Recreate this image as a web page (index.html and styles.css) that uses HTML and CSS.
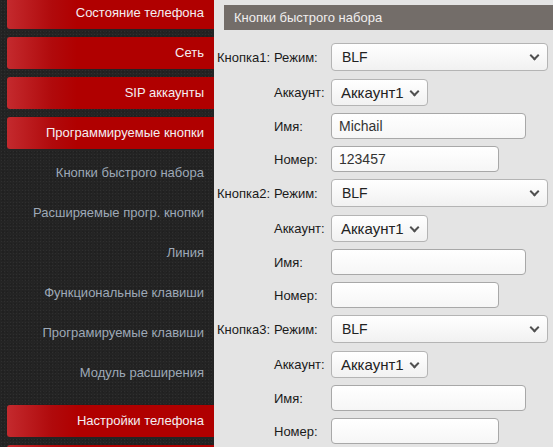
FILE: index.html
```html
<!DOCTYPE html>
<html lang="ru">
<head>
<meta charset="utf-8">
<title>Кнопки быстрого набора</title>
<link rel="stylesheet" href="styles.css">
</head>
<body>
<div class="page">
  <nav class="sidebar">
    <a class="btn first">Состояние телефона</a>
    <a class="btn">Сеть</a>
    <a class="btn">SIP аккаунты</a>
    <a class="btn">Программируемые кнопки</a>
    <div class="submenu">
      <a class="sub">Кнопки быстрого набора</a>
      <a class="sub">Расширяемые прогр. кнопки</a>
      <a class="sub">Линия</a>
      <a class="sub">Функциональные клавиши</a>
      <a class="sub">Програмируемые клавиши</a>
      <a class="sub">Модуль расширения</a>
    </div>
    <a class="btn">Настройки телефона</a>
    <a class="btn last"></a>
  </nav>
  <main class="main">
    <div class="title">Кнопки быстрого набора</div>
    <div class="form">
      <div class="key">Кнопка1:</div><div class="lbl">Режим:</div>
      <div class="field first"><div class="select wide">BLF<span class="chev"></span></div></div>
      <div class="key"></div><div class="lbl">Аккаунт:</div>
      <div class="field"><div class="select acc">Аккаунт1<span class="chev"></span></div></div>
      <div class="key"></div><div class="lbl">Имя:</div>
      <div class="field"><div class="input name">Michail</div></div>
      <div class="key"></div><div class="lbl">Номер:</div>
      <div class="field"><div class="input num">123457</div></div>

      <div class="key">Кнопка2:</div><div class="lbl">Режим:</div>
      <div class="field first"><div class="select wide">BLF<span class="chev"></span></div></div>
      <div class="key"></div><div class="lbl">Аккаунт:</div>
      <div class="field"><div class="select acc">Аккаунт1<span class="chev"></span></div></div>
      <div class="key"></div><div class="lbl">Имя:</div>
      <div class="field"><div class="input name"></div></div>
      <div class="key"></div><div class="lbl">Номер:</div>
      <div class="field"><div class="input num"></div></div>

      <div class="key">Кнопка3:</div><div class="lbl">Режим:</div>
      <div class="field first"><div class="select wide">BLF<span class="chev"></span></div></div>
      <div class="key"></div><div class="lbl">Аккаунт:</div>
      <div class="field"><div class="select acc">Аккаунт1<span class="chev"></span></div></div>
      <div class="key"></div><div class="lbl">Имя:</div>
      <div class="field"><div class="input name"></div></div>
      <div class="key"></div><div class="lbl">Номер:</div>
      <div class="field"><div class="input num"></div></div>
    </div>
  </main>
</div>
</body>
</html>
```
FILE: styles.css
```css
html, body {
  margin: 0;
  padding: 0;
  height: 100%;
  overflow: hidden;
}
body {
  font-family: "Liberation Sans", Arial, sans-serif;
  font-size: 13px;
  background: #e4e4e4;
}
.page {
  display: flex;
  height: 447px;
  overflow: hidden;
}
.sidebar {
  width: 207px;
  padding-left: 7px;
  flex: none;
  display: flex;
  flex-direction: column;
  gap: 8px;
  background-color: #242424;
  background-image:
    radial-gradient(rgba(255,255,255,0.05) 0.6px, transparent 0.8px),
    radial-gradient(rgba(0,0,0,0.25) 0.6px, transparent 0.8px);
  background-size: 3px 3px, 4px 4px;
  background-position: 0 0, 1px 2px;
}
.btn {
  display: block;
  height: 32px;
  line-height: 32px;
  flex: none;
  text-align: right;
  padding-right: 10px;
  color: #f4eef2;
  border-radius: 3px 0 0 3px;
  background: linear-gradient(to right, #c42a2e 0, #b00a0c 45px, #b00000 70px, #b00000 100%);
}
.btn.first {
  margin-top: -3px;
}
.submenu {
  display: flex;
  flex-direction: column;
  margin-top: -4px;
  padding-bottom: 4px;
}
.sub {
  display: block;
  height: 40px;
  line-height: 40px;
  text-align: right;
  padding-right: 10px;
  color: #9ea9b7;
}
.main {
  flex: 1;
  background: #e4e4e4;
  padding-top: 5px;
}
.title {
  margin-left: 10px;
  height: 25px;
  line-height: 25px;
  background: #736d69;
  color: #f0eeee;
  padding-left: 10px;
}
.form {
  display: grid;
  grid-template-columns: 60px 57px auto;
  margin-top: 13px;
  color: #1a1a1a;
}
.key {
  padding-left: 3px;
  display: flex;
  align-items: center;
  padding-bottom: 7px;
}
.lbl {
  display: flex;
  align-items: center;
  white-space: nowrap;
  padding-bottom: 7px;
}
.field {
  padding-bottom: 7px;
}
.field.first {
  padding-bottom: 8px;
}
.select {
  position: relative;
  box-sizing: border-box;
  border: 1px solid #b4b4b4;
  border-radius: 4px;
  background: linear-gradient(#ffffff, #f1f1f1);
  font-family: "Liberation Sans", Arial, sans-serif;
  font-size: 15px;
  color: #222;
  padding-left: 10px;
}
.select.wide {
  width: 217px;
  height: 28px;
  line-height: 27px;
  font-size: 14px;
}
.select.acc {
  width: 97px;
  height: 27px;
  line-height: 26px;
  padding-left: 9px;
}
.chev {
  position: absolute;
  right: 9px;
  top: 50%;
  width: 5px;
  height: 5px;
  margin-top: -5px;
  border-right: 2px solid #505050;
  border-bottom: 2px solid #505050;
  transform: rotate(45deg);
}
.input {
  box-sizing: border-box;
  height: 26px;
  line-height: 24px;
  border: 1px solid #a8a8a8;
  border-radius: 4px;
  background: linear-gradient(#ffffff, #f6f6f6);
  font-family: "Liberation Sans", Arial, sans-serif;
  font-size: 14px;
  color: #333;
  padding-left: 7px;
}
.input.name { width: 195px; }
.input.num { width: 168px; }
```
